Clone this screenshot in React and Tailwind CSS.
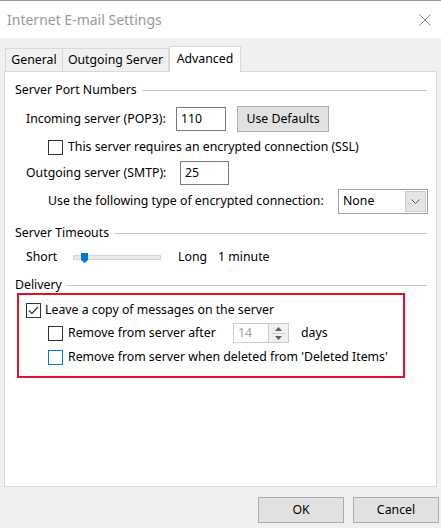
import React from 'react';

const font = { fontFamily: '"Noto Sans", "Open Sans", sans-serif' };

const Checkbox = ({ checked, focus }) => (
  <span
    className={`w-[15px] h-[15px] shrink-0 bg-white border flex items-center justify-center ${
      focus ? 'border-[#0078d7]' : 'border-[#333333]'
    }`}
  >
    {checked && (
      <svg width="11" height="9" viewBox="0 0 11 9" fill="none">
        <path d="M1 4.5 L4 7.5 L10 1" stroke="#333" strokeWidth="1.2" />
      </svg>
    )}
  </span>
);

const Heading = ({ children }) => (
  <div className="h-[16px] pl-[10px] pr-[9px] flex items-center gap-[5px]">
    <span className="leading-none">{children}</span>
    <span className="flex-1 h-px bg-[#c4c4c4]" />
  </div>
);

const Button = ({ children, className = '' }) => (
  <button className={`bg-[#e1e1e1] border border-[#adadad] flex items-center justify-center ${className}`}>
    {children}
  </button>
);

export default function App() {
  return (
    <div className="w-[441px] h-[528px] bg-[#f0f0f0] flex flex-col text-[12.3px] text-black whitespace-nowrap" style={font}>
      {/* Title bar */}
      <div className="h-[38px] bg-white border-t border-[#9a9a9a] flex items-center justify-between pl-[7px] pr-[10px]">
        <span className="text-[14px] text-[#999999]">Internet E-mail Settings</span>
        <svg width="12" height="12" viewBox="0 0 12 12" className="mt-[1px]">
          <path d="M0.5 0.5 L11.5 11.5 M11.5 0.5 L0.5 11.5" stroke="#8a8a8a" strokeWidth="1" />
        </svg>
      </div>

      {/* Tabs */}
      <div className="pt-[8px] pl-[5px] flex items-end relative z-10">
        <div className="w-[58px] h-[23px] border border-b-0 border-[#d9d9d9] flex items-center justify-center pt-[1px]">General</div>
        <div className="w-[106px] h-[23px] border border-b-0 border-l-0 border-[#d9d9d9] flex items-center justify-center pt-[1px]">Outgoing Server</div>
        <div className="w-[72px] h-[26px] bg-white border border-b-0 border-[#d9d9d9] -mb-px flex items-center justify-center pb-[1px]">
          Advanced
        </div>
      </div>

      {/* Panel */}
      <div className="mx-[4px] w-[433px] h-[416px] bg-white border border-[#d9d9d9]">
        <div className="mt-[10px]">
          <Heading>Server Port Numbers</Heading>
        </div>

        <div className="mt-[8px] h-[26px] pl-[21px] flex items-center">
          <span className="w-[150px]">Incoming server (POP3):</span>
          <span className="w-[50px] h-[24px] border border-[#7a7a7a] flex items-center pl-[4px]">110</span>
          <Button className="ml-[11px] w-[92px] h-[26px]">Use Defaults</Button>
        </div>

        <div className="mt-[7px] h-[16px] pl-[43px] flex items-center gap-[5px]">
          <Checkbox />
          <span>This server requires an encrypted connection (SSL)</span>
        </div>

        <div className="mt-[6px] h-[24px] pl-[21px] flex items-center">
          <span className="w-[154px]">Outgoing server (SMTP):</span>
          <span className="w-[49px] h-[24px] border border-[#7a7a7a] flex items-center pl-[4px]">25</span>
        </div>

        <div className="mt-[4px] h-[25px] pl-[43px] flex items-center">
          <span className="w-[290px]">Use the following type of encrypted connection:</span>
          <div className="w-[90px] h-[25px] border border-[#a0a0a0] flex items-center justify-between pl-[4px] pr-px">
            <span>None</span>
            <span className="w-[21px] h-[21px] bg-[#e5e5e5] border border-[#cccccc] flex items-center justify-center">
              <svg width="9" height="5" viewBox="0 0 9 5">
                <path d="M0.5 0.5 L4.5 4.5 L8.5 0.5" stroke="#555" fill="none" strokeWidth="1" />
              </svg>
            </span>
          </div>
        </div>

        <div className="mt-[11px]">
          <Heading>Server Timeouts</Heading>
        </div>

        <div className="mt-[8px] h-[16px] pl-[21px] flex items-center">
          <span className="w-[47px]">Short</span>
          <div className="relative w-[88px] h-[5px] bg-[#e7eaea] border border-[#d6d6d6]">
            <svg width="7" height="10" viewBox="0 0 7 10" className="absolute left-[7px] -top-[3px]">
              <path d="M0 0 H7 V7 L3.5 10 L0 7 Z" fill="#0078d7" />
            </svg>
          </div>
          <span className="ml-[17px]">Long</span>
          <span className="ml-[11px]">1 minute</span>
        </div>

        <div className="mt-[12px]">
          <Heading>Delivery</Heading>
        </div>

        <div className="ml-[12px] w-[388px] border-2 border-[#e81123] pt-[7px] pb-[11px]">
          <div className="h-[16px] pl-[7px] flex items-center gap-[4px]">
            <Checkbox checked />
            <span>Leave a copy of messages on the server</span>
          </div>
          <div className="mt-[5px] h-[20px] pl-[29px] flex items-center">
            <Checkbox />
            <span className="ml-[5px] w-[165px]">Remove from server after</span>
            <div className="w-[56px] h-[20px] border border-[#cccccc] flex items-center">
              <span className="flex-1 pl-[4px] text-[#a0a0a0]">14</span>
              <span className="w-[20px] h-full border-l border-[#cccccc] bg-[#f0f0f0] flex flex-col items-center justify-center gap-[2px]">
                <svg width="7" height="4" viewBox="0 0 7 4"><path d="M0 4 L3.5 0 L7 4 Z" fill="#606060" /></svg>
                <span className="w-[14px] h-px bg-[#d0d0d0]" />
                <svg width="7" height="4" viewBox="0 0 7 4"><path d="M0 0 L3.5 4 L7 0 Z" fill="#606060" /></svg>
              </span>
            </div>
            <span className="ml-[12px]">days</span>
          </div>
          <div className="mt-[6px] h-[16px] pl-[29px] flex items-center gap-[5px]">
            <Checkbox focus />
            <span>Remove from server when deleted from 'Deleted Items'</span>
          </div>
        </div>
      </div>

      {/* Footer buttons */}
      <div className="mt-[10px] flex justify-end gap-[9px] pr-[2px]">
        <Button className="w-[86px] h-[26px]">OK</Button>
        <Button className="w-[86px] h-[26px]">Cancel</Button>
      </div>
    </div>
  );
}
